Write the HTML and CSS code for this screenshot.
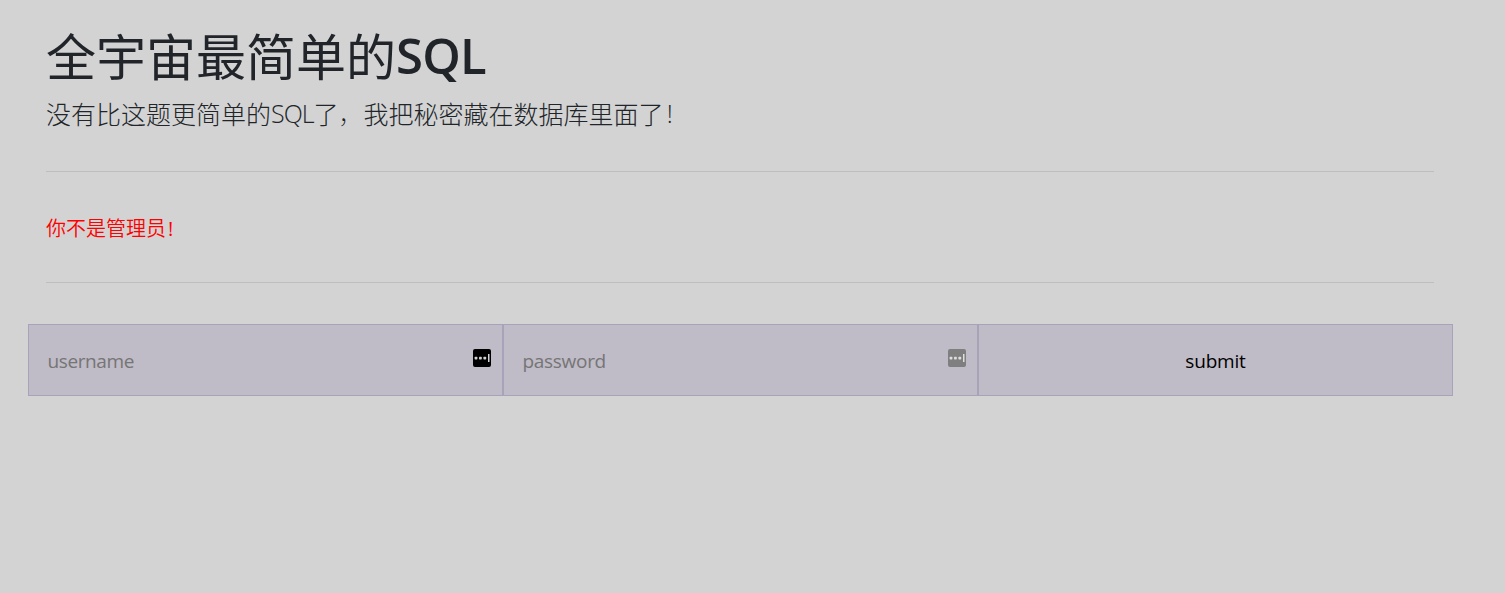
FILE: index.html
```html
<!DOCTYPE html>
<html lang="zh-CN">
<head>
<meta charset="utf-8">
<title>SQL</title>
<link rel="stylesheet" href="styles.css">
</head>
<body>
<main class="container">
  <header class="intro">
    <h1 class="title"><span class="title-cjk">全宇宙最简单的</span><span class="title-latin">SQL</span></h1>
    <p class="lead"><span>没有比这题更简单的</span><span class="lead-latin">SQL</span><span>了<span class="comma">，</span>我把秘密藏在数据库里面了</span><span class="mark">!</span></p>
    <hr class="rule">
    <p class="message">你不是管理员<span class="mark">!</span></p>
    <hr class="rule">
  </header>
  <form class="login">
    <label class="cell"><span class="hint hint-user">username</span>
      <svg class="key" viewBox="0 0 18 18"><rect width="18" height="18" rx="2" fill="#000"/><g fill="#d3d3d3"><rect x="1.6" y="7.8" width="2.8" height="2.6" rx=".7"/><rect x="6" y="7.8" width="2.8" height="2.6" rx=".7"/><rect x="10.4" y="7.8" width="2.8" height="2.6" rx=".7"/><rect x="15" y="5" width="1.5" height="8"/></g></svg>
    </label>
    <label class="cell"><span class="hint hint-pass">password</span>
      <svg class="key" viewBox="0 0 18 18"><rect width="18" height="18" rx="2" fill="#7f7f7f"/><g fill="#dedede"><rect x="1.6" y="7.8" width="2.8" height="2.6" rx=".7"/><rect x="6" y="7.8" width="2.8" height="2.6" rx=".7"/><rect x="10.4" y="7.8" width="2.8" height="2.6" rx=".7"/><rect x="15" y="5" width="1.5" height="8"/></g></svg>
    </label>
    <button class="cell submit" type="button"><span class="submit-text">submit</span></button>
  </form>
</main>
</body>
</html>
```
FILE: styles.css
```css
* { box-sizing: border-box; }
body { margin: 0; background: #d3d3d3; color: #212529; font-family: "Open Sans", "Noto Sans CJK SC", sans-serif; }
.container { padding: 23px 52px 0 28px; }
.intro { padding: 0 19px 0 18px; }
.title { display: flex; margin: 0; height: 62px; line-height: 62px; font-size: 50px; font-weight: 400; }
.title-cjk { font-family: "Noto Sans CJK SC", sans-serif; }
.title-latin { padding-top: 1px; font-weight: 600; font-size: 49px; letter-spacing: -0.8px; }
.lead { display: flex; margin: 9px 0 0; height: 38px; line-height: 38px; font-size: 25px; font-weight: 300; font-family: "Noto Sans CJK SC", sans-serif; }
.lead-latin { font-family: "Open Sans", sans-serif; letter-spacing: -1px; }
.comma { font-weight: 100; }
.mark { margin-left: 3px; font-family: "Open Sans", sans-serif; }
.rule { margin: 39px 0 0; border: 0; border-top: 1px solid #bebebe; }
.message { margin: 41px 0 0; height: 30px; line-height: 30px; font-size: 20px; color: #f00; font-family: "Noto Sans CJK SC", sans-serif; font-weight: 350; }
.message .mark { margin-left: 2px; font-weight: 400; }
.message + .rule { margin-top: 39px; }
.login { display: grid; grid-template-columns: repeat(3, 1fr); margin: 41px 0 0; }
.cell { display: flex; align-items: center; justify-content: space-between; height: 72px; padding: 0 11px 0 18.5px; border: 1px solid #a9a3b9; background: #bfbbc7; color: #757575; font: 19px "Open Sans", sans-serif; }
.hint { padding-top: 1px; }
.hint-user { letter-spacing: -0.4px; }
.hint-pass { letter-spacing: -0.3px; }
.key { width: 18px; height: 18px; margin-top: -5px; }
.submit { justify-content: center; padding: 1px 0 0; color: #000; letter-spacing: -0.2px; }
```
